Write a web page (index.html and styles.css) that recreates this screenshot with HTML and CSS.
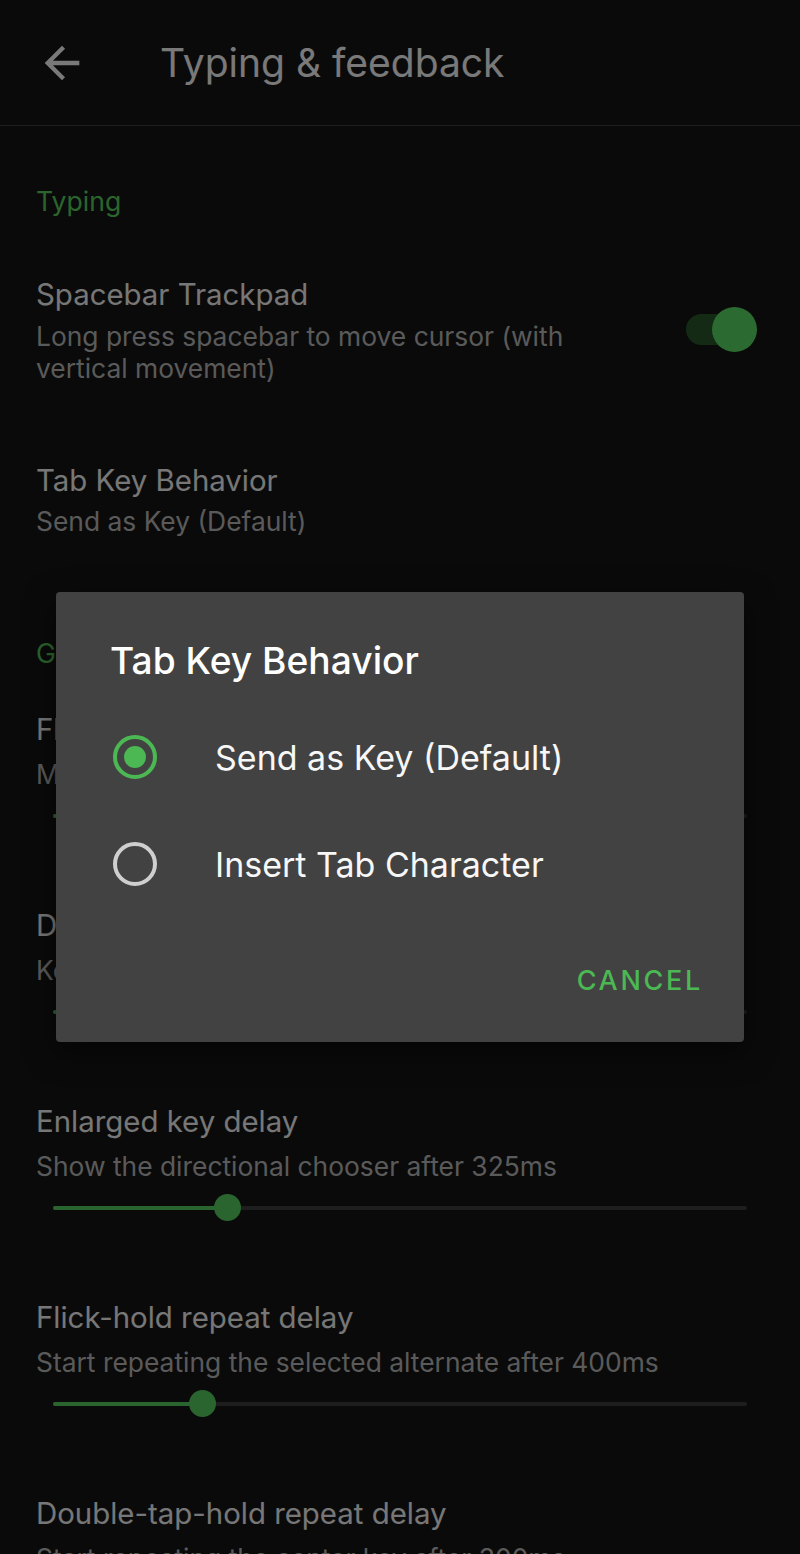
FILE: index.html
```html
<!DOCTYPE html>
<html lang="en">
<head>
<meta charset="utf-8">
<title>Typing &amp; feedback</title>
<link rel="stylesheet" href="styles.css">
</head>
<body>
<div class="screen">
  <header class="appbar">
    <svg class="back" viewBox="0 0 24 24" aria-hidden="true"><path d="M20 11H7.83l5.59-5.59L12 4l-8 8 8 8 1.41-1.41L7.83 13H20v-2z"/></svg>
    <h1 class="appbar-title">Typing &amp; feedback</h1>
  </header>

  <main class="prefs">
    <div class="section">Typing</div>
    <div class="pref pref-switch">
      <div class="pref-text">
        <div class="pref-title">Spacebar Trackpad</div>
        <div class="pref-summary">Long press spacebar to move cursor (with vertical movement)</div>
      </div>
      <div class="switch on"><span class="switch-track"></span><span class="switch-thumb"></span></div>
    </div>
    <div class="pref pref-second">
      <div class="pref-text">
        <div class="pref-title">Tab Key Behavior</div>
        <div class="pref-summary tight">Send as Key (Default)</div>
      </div>
    </div>

    <div class="section section-2">Gestures</div>
    <div class="pref-slider">
      <div class="pref-title">Flick distance</div>
      <div class="pref-summary">Minimum flick distance of 40dp</div>
      <div class="slider"><div class="slider-track"><div class="slider-fill" style="width:30%"></div><span class="slider-thumb"></span></div></div>
    </div>
    <div class="pref-slider">
      <div class="pref-title">Double-tap speed</div>
      <div class="pref-summary">Keys tapped twice within 250ms</div>
      <div class="slider"><div class="slider-track"><div class="slider-fill" style="width:35%"></div><span class="slider-thumb"></span></div></div>
    </div>
    <div class="pref-slider">
      <div class="pref-title">Enlarged key delay</div>
      <div class="pref-summary">Show the directional chooser after 325ms</div>
      <div class="slider"><div class="slider-track"><div class="slider-fill" style="width:25.1%"></div><span class="slider-thumb"></span></div></div>
    </div>
    <div class="pref-slider">
      <div class="pref-title">Flick-hold repeat delay</div>
      <div class="pref-summary">Start repeating the selected alternate after 400ms</div>
      <div class="slider"><div class="slider-track"><div class="slider-fill" style="width:21.5%"></div><span class="slider-thumb"></span></div></div>
    </div>
    <div class="pref-slider">
      <div class="pref-title">Double-tap-hold repeat delay</div>
      <div class="pref-summary">Start repeating the center key after 300ms</div>
    </div>
  </main>
</div>

<div class="scrim"></div>

<div class="dialog" role="dialog" aria-label="Tab Key Behavior">
  <h2 class="dialog-title">Tab Key Behavior</h2>
  <ul class="options">
    <li class="option"><span class="radio checked"></span><span class="option-label">Send as Key (Default)</span></li>
    <li class="option"><span class="radio"></span><span class="option-label">Insert Tab Character</span></li>
  </ul>
  <div class="actions"><button class="btn-text">CANCEL</button></div>
</div>
</body>
</html>
```

FILE: styles.css
```css
* { box-sizing: border-box; }

html, body {
  margin: 0;
  padding: 0;
}

body {
  width: 800px;
  height: 1554px;
  overflow: hidden;
  background: #141414;
  font-family: Inter, Roboto, "Liberation Sans", sans-serif;
  position: relative;
}

.appbar {
  height: 126px;
  border-bottom: 1px solid #3a3a3a;
  display: flex;
  align-items: center;
}

.back {
  width: 52px;
  height: 52px;
  margin-left: 36px;
  fill: #f2f2f2;
  flex: none;
}

.appbar-title {
  margin: 0 0 0 72px;
  font-size: 39px;
  font-weight: 400;
  color: #f2f2f2;
  line-height: 48px;
}

.prefs {
  display: flex;
  flex-direction: column;
}

.section {
  padding: 55px 36px 16px;
  line-height: 40px;
  font-size: 26.6px;
  color: #58c85c;
}

.section-2 { padding-top: 58px; }

.pref {
  display: flex;
  align-items: center;
  padding: 38px 44px 38px 36px;
}

.pref-second { padding-top: 39px; }

.pref-text {
  flex: 1;
  min-width: 0;
}

.pref-title {
  font-size: 29.4px;
  line-height: 40px;
  color: #eeeeee;
}

.pref-summary {
  margin-top: 5px;
  font-size: 26.4px;
  line-height: 32px;
  color: #b4b4b4;
}

.pref-summary.tight { margin-top: 4px; }

.switch {
  position: relative;
  width: 70px;
  height: 45px;
  margin-left: 60px;
  flex: none;
}

.switch-track {
  position: absolute;
  left: 0;
  top: 7px;
  width: 70px;
  height: 31px;
  border-radius: 16px;
  background: #28542a;
}

.switch-thumb {
  position: absolute;
  right: -1px;
  top: 0;
  width: 45px;
  height: 45px;
  border-radius: 50%;
  background: #56d460;
}

.pref-slider {
  padding: 21px 36px 49px;
}

.pref-slider .pref-summary { margin-top: 8px; }

.slider {
  margin-top: 6px;
  height: 40px;
  padding: 0 17px;
  display: flex;
  align-items: center;
}

.slider-track {
  position: relative;
  flex: 1;
  height: 4px;
  border-radius: 2px;
  background: #3c3c3c;
  display: flex;
}

.slider-fill {
  height: 4px;
  border-radius: 2px;
  background: #54c85c;
}

.slider-thumb {
  width: 27px;
  height: 27px;
  margin: -12px 0 0 -13px;
  border-radius: 50%;
  background: #54c85c;
  flex: none;
}

.scrim {
  position: absolute;
  inset: 0;
  background: rgba(0, 0, 0, 0.5);
}

.dialog {
  position: absolute;
  left: 56px;
  top: 592px;
  width: 688px;
  height: 450px;
  background: #424242;
  border-radius: 4px;
  box-shadow: 0 10px 30px rgba(0, 0, 0, 0.5);
  padding: 45px 0 0;
  display: flex;
  flex-direction: column;
}

.dialog-title {
  margin: 0;
  padding: 0 54px;
  font-size: 37.2px;
  font-weight: 500;
  line-height: 48px;
  color: #ffffff;
}

.options {
  list-style: none;
  margin: 19px 0 0;
  padding: 0;
}

.option {
  height: 106px;
  display: flex;
  align-items: center;
  padding-left: 57px;
}

.option + .option { height: 108px; }

.radio {
  width: 44px;
  height: 44px;
  border-radius: 50%;
  border: 4.5px solid #cfcfcf;
  flex: none;
  display: flex;
  align-items: center;
  justify-content: center;
}

.radio.checked {
  border-color: #4cb853;
}

.radio.checked::after {
  content: "";
  width: 22px;
  height: 22px;
  border-radius: 50%;
  background: #4cb853;
}

.option-label {
  margin-left: 58px;
  font-size: 34px;
  color: #f7f7f7;
}

.actions {
  margin-top: 26px;
  display: flex;
  justify-content: flex-end;
  padding-right: 41px;
}

.btn-text {
  height: 72px;
  border: 0;
  padding: 0;
  background: none;
  font-family: inherit;
  font-size: 27px;
  font-weight: 500;
  letter-spacing: 2.7px;
  color: #4cb853;
}
```
